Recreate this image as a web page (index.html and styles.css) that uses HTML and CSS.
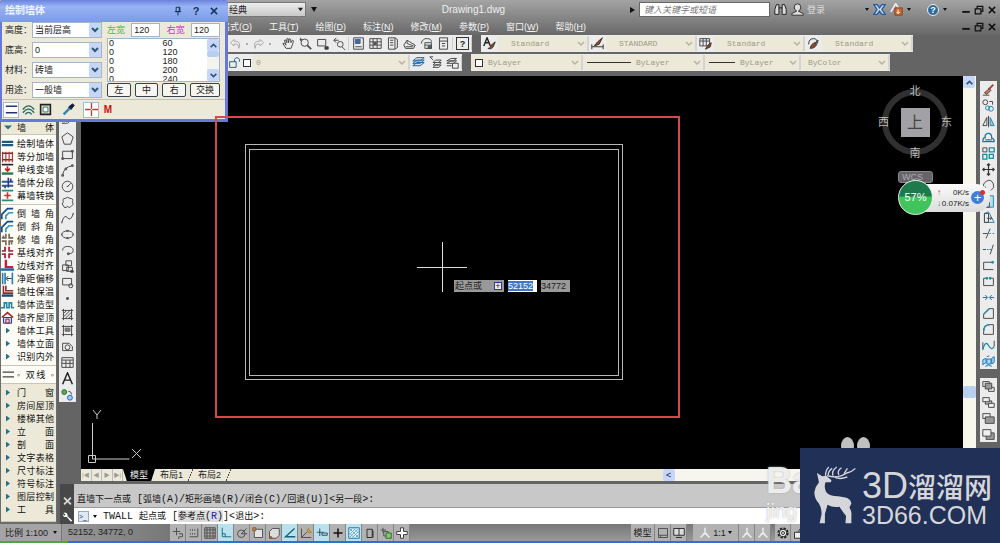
FILE: index.html
```html
<!DOCTYPE html>
<html>
<head>
    <meta charset="UTF-8">
    <meta name="viewport" content="width=device-width, initial-scale=1.0">
    <title>Drawing1.dwg</title>
    <link rel="stylesheet" href="styles.css">
</head>
<body>
<svg class="sprite" width="0" height="0">
    <!-- dialog -->
    <symbol id="pin" viewBox="0 0 16 16"><path d="M5 2h6v7H5zM3 9h10M8 9v6M10 2v7" stroke-width="1.6"/></symbol>
    <symbol id="cross" viewBox="0 0 16 16"><path d="M3 3l10 10M13 3L3 13" stroke-width="2.4"/></symbol>
    <symbol id="two-lines" viewBox="0 0 16 16"><path d="M1 4h14M1 12h14" stroke="#237" stroke-width="2"/></symbol>
    <symbol id="arcs" viewBox="0 0 16 16"><path d="M1 8q7-9 14 0M1 12q7-9 14 0M4 14q4-5 8 0" stroke="#276a62" stroke-width="1.6"/></symbol>
    <symbol id="box" viewBox="0 0 16 16"><path d="M2 2h12v12H2z" stroke="#222" stroke-width="2"/><path d="M5 5h6v6H5z" fill="#fff" stroke="#2b7a5c"/></symbol>
    <symbol id="dropper" viewBox="0 0 16 16"><path d="M2 14l7-7" stroke="#38a" stroke-width="3"/><path d="M8 5l3 3 4-5-2-2z" fill="#124" stroke="#124"/></symbol>
    <symbol id="cross-red" viewBox="0 0 16 16"><path d="M8 0v7M8 9v7M0 8h7M9 8h7" stroke="#c33" stroke-width="1.6"/></symbol>
    <!-- standard toolbar -->
    <symbol id="undo" viewBox="0 0 16 16"><path d="M6 3L2 7l4 4V9q6-2 6 5 4-9-6-9z" stroke="#aaa"/></symbol>
    <symbol id="redo" viewBox="0 0 16 16"><path d="M10 3l4 4-4 4V9Q4 7 4 14 0 5 10 5z" stroke="#aaa"/></symbol>
    <symbol id="hand" viewBox="0 0 16 16"><path d="M5 14L1 8q2-2 4 2L3 4q2-2 3 3L6 2q2-2 2 5l1-5q2-1 2 5l2-3q2 0 0 5l-2 5z"/></symbol>
    <symbol id="zoom" viewBox="0 0 16 16"><circle cx="7" cy="7" r="4.5"/><path d="M10 10l5 5" stroke-width="2"/><path d="M1 3h3M2 1v4"/></symbol>
    <symbol id="zoom-win" viewBox="0 0 16 16"><path d="M2 3h10v8H2z"/><path d="M11 12h4v3h-4z" fill="#333"/></symbol>
    <symbol id="zoom-prev" viewBox="0 0 16 16"><circle cx="9" cy="9" r="3.5"/><path d="M11 12l4 4M1 4h6M4 1L1 4l3 3"/></symbol>
    <symbol id="palette" viewBox="0 0 16 16"><path d="M2 1h12v14H2z"/><path d="M4 3h6v5H4z" fill="#469" stroke="#469"/><path d="M4 12h8"/></symbol>
    <symbol id="design" viewBox="0 0 16 16"><path d="M1 2h14v12H1zM5 2v12M10 2v12M1 6h14M1 10h14"/><path d="M6 7h3v2H6z" fill="#469"/></symbol>
    <symbol id="tool-pal" viewBox="0 0 16 16"><path d="M3 1h8v14H3zM11 1l3 2v10l-3 2M5 4h4M5 7h4M5 10h4"/></symbol>
    <symbol id="sheet" viewBox="0 0 16 16"><path d="M1 10l4-6 10 6-2 4H3zM5 4v4l8 3M3 12h9"/></symbol>
    <symbol id="markup" viewBox="0 0 16 16"><path d="M2 8q-1-3 2-4 1-3 5-2 5 0 5 4M6 7h8v7H6zM6 10h8"/><path d="M10 11h4v3h-4z" fill="#469"/></symbol>
    <symbol id="calc" viewBox="0 0 16 16"><path d="M3 1h10v14H3zM3 5h10M6 8h4M6 11h4"/></symbol>
    <symbol id="layers" viewBox="0 0 16 16"><path d="M1 12h9l5-4H6zM1 9h9l5-4H6zM1 6h9l5-4H6z" fill="#dde" stroke="#269"/></symbol>
    <symbol id="layer-prev" viewBox="0 0 16 16"><path d="M5 14h7l3-3H8zM5 11h7l3-3H8zM5 8h7l3-3H8zM1 1l4 4M1 1h4"/></symbol>
    <symbol id="layer-state" viewBox="0 0 16 16"><path d="M1 12h6M1 9h8l4-3H6zM1 6h8l4-3H6z"/><path d="M8 9h7v6H8z" fill="#eee"/></symbol>
    <symbol id="lock" viewBox="0 0 16 16"><path d="M2 7h8v7H2zM8 7V4q3-4 6 0v3" stroke="#267"/></symbol>
    <symbol id="brush" viewBox="0 0 16 16"><path d="M2 9q0-7 6-7 5 0 5 6" stroke="#333"/><path d="M14 4L9 9" stroke-width="2"/><path d="M10 7q-5 1-6 7 6 0 8-5z" fill="#8a4a2c" stroke="#432"/></symbol>
    <symbol id="text-style" viewBox="0 0 16 16"><path d="M1 11L5 1l4 10M3 7h5" stroke="#222" stroke-width="1.8"/><path d="M15 6l-5 4q-1 5-4 4 5 2 7-3z" fill="#8a4a2c" stroke="#432"/></symbol>
    <symbol id="dim-style" viewBox="0 0 16 16"><path d="M1 9v6M15 9v6M1 12h14" stroke="#333"/><path d="M14 1L8 6 4 11l6-2z" fill="#8a4a2c" stroke="#432"/></symbol>
    <symbol id="table-style" viewBox="0 0 16 16"><path d="M1 2h12v9H1zM1 5h12M5 2v9M9 2v9"/><path d="M15 7l-4 3-3 5 6-3z" fill="#8a4a2c" stroke="#432"/></symbol>
    <!-- title bar -->
    <symbol id="binoculars" viewBox="0 0 16 16"><path d="M1 14V8l2-6h3v12zM10 14V2h3l2 6v6zM6 6h4" fill="#ddd" stroke="#222"/></symbol>
    <symbol id="user" viewBox="0 0 16 16"><path d="M8 1q4 0 4 4t-3 5l6 3v2H1v-2l6-3Q4 9 4 5t4-4z" fill="#ddd" stroke="#333"/></symbol>
    <symbol id="exchange" viewBox="0 0 16 16"><path d="M1 2h4l3 4 3-4h4l-4 6 4 6h-4l-3-4-3 4H1l4-6z" fill="#c8d8f4" stroke="#225a9a" stroke-width="1.6"/></symbol>
    <symbol id="a360" viewBox="0 0 16 16"><path d="M1 11L7 1l4 6" stroke="#eee" stroke-width="2"/><path d="M6 6h9v9H6z" fill="#c96a26" stroke="#843"/><path d="M10 8v5M8 11l2 2 2-2" stroke="#fff"/></symbol>
    <symbol id="minimize" viewBox="0 0 16 16"><path d="M2 11h12" stroke="#111" stroke-width="3"/></symbol>
    <symbol id="restore" viewBox="0 0 16 16"><path d="M5 5V2h9v8h-3M2 6h9v8H2z" stroke="#111" stroke-width="2"/></symbol>
    <!-- wall tools -->
    <symbol id="w-draw" viewBox="0 0 16 16"><path d="M1 6h14M1 10h14" stroke="#1d5a80" stroke-width="3"/></symbol>
    <symbol id="w-split" viewBox="0 0 16 16"><path d="M1 4h14M1 12h14" stroke="#822" stroke-width="2"/><path d="M2 2v13M6 2v13M10 2v13M14 2v13" stroke="#a33" stroke-width="1.4"/></symbol>
    <symbol id="w-single" viewBox="0 0 16 16"><path d="M1 2h14" stroke="#222" stroke-width="2"/><path d="M8 4v5M5 7l3 3 3-3" stroke="#c22" stroke-width="2"/><path d="M1 13h14" stroke="#297c55" stroke-width="3"/></symbol>
    <symbol id="w-seg" viewBox="0 0 16 16"><path d="M1 7h14M1 12h14" stroke="#268" stroke-width="2.4"/><path d="M9 2v12M5 12v3M12 3v4" stroke="#339" stroke-width="2"/></symbol>
    <symbol id="w-curtain" viewBox="0 0 16 16"><path d="M1 2h14M1 14h14" stroke="#2a8a7a" stroke-width="2"/><path d="M8 4v8M4 8h8" stroke="#c33" stroke-width="2"/></symbol>
    <symbol id="w-corner" viewBox="0 0 16 16"><path d="M1 15V9l7-7h7" stroke="#124b85" stroke-width="2"/><path d="M6 15v-4l4-4h5" stroke="#2998c0" stroke-width="2"/></symbol>
    <symbol id="w-trim" viewBox="0 0 16 16"><path d="M6 1v5H1M10 1v5h5M6 15v-5H1M10 15v-5h5M3 3v3M13 10v4" stroke="#765" stroke-width="2"/></symbol>
    <symbol id="w-base" viewBox="0 0 16 16"><path d="M5 1v5H1M10 1v5h5M5 15v-5H1M10 15v-5h5" stroke="#a23348" stroke-width="2.4"/></symbol>
    <symbol id="w-edge" viewBox="0 0 16 16"><path d="M6 1v9h9" stroke="#b24" stroke-width="3"/><path d="M0 13h16" stroke="#26a" stroke-width="3"/></symbol>
    <symbol id="w-dist" viewBox="0 0 16 16"><path d="M2 1v14M14 1v14M5 1v14" stroke="#2a82a8" stroke-width="2"/><path d="M7 8h6M9 5L6 8l3 3" stroke="#136"/></symbol>
    <symbol id="w-warm" viewBox="0 0 16 16"><path d="M3 1v9h12M6 1v6h9" stroke="#833" stroke-width="2"/><path d="M1 13h14" stroke="#247" stroke-width="3"/></symbol>
    <symbol id="w-shape" viewBox="0 0 16 16"><path d="M0 12h4V6h3v6h3V6h3v6h3" stroke="#2687a0" stroke-width="2"/></symbol>
    <symbol id="w-roof" viewBox="0 0 16 16"><path d="M1 8l7-6 7 6" stroke="#a22" stroke-width="2"/><path d="M3 8h10v7H3z" fill="#c8d0ff" stroke="#239"/><path d="M6 10h4v5H6z" stroke="#a22"/></symbol>
    <symbol id="w-double" viewBox="0 0 16 16"><path d="M2 5h14M2 11h14" stroke="#444" stroke-width="1.6"/></symbol>
    <!-- draw toolbar -->
    <symbol id="d-pline" viewBox="0 0 16 16"><path d="M1 9h5q5 0 5-5h4M2 7h3M12 2h2"/></symbol>
    <symbol id="d-polygon" viewBox="0 0 16 16"><path d="M8 1l7 5-3 9H4L1 6z"/></symbol>
    <symbol id="d-rect" viewBox="0 0 16 16"><path d="M2 4h12v9H2z"/><path d="M1 12h2v2H1zM13 3h2v2h-2z"/></symbol>
    <symbol id="d-arc" viewBox="0 0 16 16"><path d="M2 14Q3 4 14 2M1 13h2v2H1zM13 1h2v2h-2zM5 5h2v2H5z"/></symbol>
    <symbol id="d-circle" viewBox="0 0 16 16"><circle cx="8" cy="8" r="6.5"/><path d="M8 8l4-4M7 8h2"/></symbol>
    <symbol id="d-cloud" viewBox="0 0 16 16"><path d="M5 3q3-3 6 0 5 0 3 4 2 4-1 5-2 4-5 1-4 3-5-1-3-2 0-5-2-4 2-4z"/></symbol>
    <symbol id="d-spline" viewBox="0 0 16 16"><path d="M1 13Q4 2 8 7t7-5M1 12v2M15 1v2"/></symbol>
    <symbol id="d-ellipse" viewBox="0 0 16 16"><ellipse cx="8" cy="8" rx="7" ry="4.5"/><path d="M7 3h2v1H7zM7 12h2v1H7zM1 7v2M15 7v2"/></symbol>
    <symbol id="d-earc" viewBox="0 0 16 16"><path d="M2 8q0-5 6-5 7 0 7 5 0 4-6 4M8 11h2v2H8z"/></symbol>
    <symbol id="d-insert" viewBox="0 0 16 16"><path d="M6 1h7v6H6zM2 6h7v7H2zM7 9h7v5H7z"/><path d="M12 13h3v2h-3z" fill="#333"/></symbol>
    <symbol id="d-block" viewBox="0 0 16 16"><path d="M2 3h11v8H2z"/><circle cx="12" cy="12" r="2.5"/></symbol>
    <symbol id="d-point" viewBox="0 0 16 16"><path d="M7 7h2v2H7z" fill="#444"/></symbol>
    <symbol id="d-hatch" viewBox="0 0 16 16"><path d="M1 3h14M1 13h14M3 1v14M13 1v14M3 7l4-4M3 11l8-8M5 13l8-8M9 13l4-4"/></symbol>
    <symbol id="d-grad" viewBox="0 0 16 16"><path d="M1 3h14M1 13h14M3 1v14M13 1v14"/><path d="M5 5h6v4H5z" fill="#777" stroke="#777"/></symbol>
    <symbol id="d-region" viewBox="0 0 16 16"><path d="M2 13V4h8l4 4v5z"/><circle cx="8" cy="9" r="3"/></symbol>
    <symbol id="d-table" viewBox="0 0 16 16"><path d="M1 2h14v12H1zM1 5h14M1 9h14M6 5v9M11 5v9"/></symbol>
    <symbol id="d-text" viewBox="0 0 16 16"><path d="M2 15L8 1l6 14M4 10h8" stroke="#222" stroke-width="1.8"/></symbol>
    <symbol id="d-add" viewBox="0 0 16 16"><circle cx="4" cy="5" r="3" fill="#5a5" stroke="#363"/><circle cx="11" cy="12" r="3" fill="#9cf" stroke="#26a"/><path d="M9 4q4 0 4 4"/></symbol>
    <!-- modify toolbar -->
    <symbol id="m-erase" viewBox="0 0 16 16"><path d="M14 2L8 8" stroke="#a44" stroke-width="2.4"/><path d="M9 7l-6 5 3 2 5-5z" fill="#b86" stroke="#633"/><path d="M1 15h8"/></symbol>
    <symbol id="m-copy" viewBox="0 0 16 16"><circle cx="4" cy="4" r="3"/><g stroke="#28a"><circle cx="11" cy="12" r="3"/><circle cx="7" cy="11" r="2.6"/></g><path d="M9 3h4v4"/></symbol>
    <symbol id="m-mirror" viewBox="0 0 16 16"><path d="M6 3v10H1zM8 1v14"/><path d="M10 3v10h5z" fill="#9cd" stroke="#28a"/></symbol>
    <symbol id="m-offset" viewBox="0 0 16 16"><path d="M1 13h14q0-4-3-4 0-7-5-6-4 1-3 5-3 0-3 5zM4 11h8" stroke="#27a" stroke-width="1.6"/></symbol>
    <symbol id="m-array" viewBox="0 0 16 16"><path d="M1 1h5v5H1z"/><path d="M9 1h6v5H9zM1 9h5v6H1zM9 9h5v5H9z" stroke="#28a" stroke-width="1.6"/></symbol>
    <symbol id="m-move" viewBox="0 0 16 16"><path d="M8 1v14M1 8h14M6 3l2-2 2 2M6 13l2 2 2-2M3 6L1 8l2 2M13 6l2 2-2 2" stroke="#333" stroke-width="1.5"/></symbol>
    <symbol id="m-rotate" viewBox="0 0 16 16"><path d="M4 13Q-1 7 5 3t9 3q2 5-3 8M4 9v4H0"/></symbol>
    <symbol id="m-scale" viewBox="0 0 16 16"><path d="M3 1h11v14H3z" fill="#bde" stroke="#28a"/><path d="M3 9h6v6H3z"/></symbol>
    <symbol id="m-stretch" viewBox="0 0 16 16"><path d="M3 14V3l5-2 7 13z" stroke="#28a"/><path d="M3 14V3h5v11zM6 9h6M10 7l2 2-2 2"/></symbol>
    <symbol id="m-trim" viewBox="0 0 16 16"><path d="M1 8h6M10 2L5 14"/><path d="M9 8h2M13 8h2" stroke="#28a"/></symbol>
    <symbol id="m-extend" viewBox="0 0 16 16"><path d="M1 8h4M14 2l-4 12"/><path d="M6 8h2M9 8h2" stroke="#28a"/></symbol>
    <symbol id="m-break1" viewBox="0 0 16 16"><path d="M12 4H2v9h12"/><path d="M12 3h2v2h-2z" fill="#28a" stroke="#28a"/></symbol>
    <symbol id="m-break" viewBox="0 0 16 16"><path d="M6 4H2v9h12V4h-4"/><path d="M5 3h2v2H5zM9 3h2v2H9z" fill="#28a" stroke="#28a"/></symbol>
    <symbol id="m-join" viewBox="0 0 16 16"><path d="M1 8h5M15 8h-5M4 5l3 3-3 3M12 5L9 8l3 3" stroke="#276a90"/></symbol>
    <symbol id="m-chamfer" viewBox="0 0 16 16"><path d="M2 14V9l7-7h5v12z"/><path d="M2 9l7-7" stroke="#28a" stroke-width="1.8"/></symbol>
    <symbol id="m-fillet" viewBox="0 0 16 16"><path d="M2 14v-4q0-8 8-8h4v12z"/><path d="M2 10q0-8 8-8" stroke="#28a" stroke-width="1.8"/></symbol>
    <symbol id="m-blend" viewBox="0 0 16 16"><path d="M1 4v9M15 2v7"/><path d="M1 13Q4 1 8 8t7 1" stroke="#28a" stroke-width="1.6"/></symbol>
    <symbol id="m-explode" viewBox="0 0 16 16"><path d="M1 6l4-2v5l-4 3zM6 5h5v6H6zM12 4l3-2v7l-3 2zM4 14l4-2 4 2M6 2l3-1" fill="#adf" stroke="#27a"/></symbol>
    <symbol id="o-front" viewBox="0 0 16 16"><path d="M1 2h8v6H1zM8 9h7v5H8z"/><path d="M4 4h8v7H4z" fill="#999"/></symbol>
    <symbol id="o-back" viewBox="0 0 16 16"><path d="M4 6h8v4H4z" fill="#bbb"/><path d="M1 2h8v5H1zM8 9h7v5H8z" fill="#eee"/></symbol>
    <symbol id="o-above" viewBox="0 0 16 16"><path d="M1 2h9v6H1z"/><path d="M4 6h11v8H4z" fill="#999"/></symbol>
    <symbol id="o-under" viewBox="0 0 16 16"><path d="M5 6h10v8H5z" fill="#999"/><path d="M1 2h10v8H1z" fill="#eee"/></symbol>
    <!-- status bar -->
    <symbol id="s-infer" viewBox="0 0 16 16"><path d="M6 1v10M1 6h10M9 9h5v4H9v3"/></symbol>
    <symbol id="s-snap" viewBox="0 0 16 16"><path d="M3 3v2M6 3v2M9 3v2M3 8v2M6 8v2M9 8v2M2 13h11V2"/></symbol>
    <symbol id="s-grid" viewBox="0 0 16 16"><path d="M1 1h14v14H1zM4 1v14M8 1v14M12 1v14M1 4h14M1 8h14M1 12h14"/></symbol>
    <symbol id="s-ortho" viewBox="0 0 16 16"><path d="M3 1v12h12M3 9h4v4" stroke="#167"/></symbol>
    <symbol id="s-polar" viewBox="0 0 16 16"><circle cx="7" cy="9" r="5"/><path d="M7 9l7-7M7 9h8"/></symbol>
    <symbol id="s-osnap" viewBox="0 0 16 16"><path d="M3 3h11v11H3z" fill="#e4e4e4"/><path d="M1 1h4v4H1z" fill="#b96" stroke="#852"/></symbol>
    <symbol id="s-3d" viewBox="0 0 16 16"><path d="M2 6l4-4h9v9l-4 4H2z" fill="#ddd"/><path d="M2 13h3v2H2z" fill="#b64" stroke="#852"/></symbol>
    <symbol id="s-track" viewBox="0 0 16 16"><path d="M14 2L2 13h13" stroke="#167" stroke-width="1.8"/></symbol>
    <symbol id="s-ucs" viewBox="0 0 16 16"><path d="M2 2v12h13M2 14l8-8"/><path d="M11 2l2 3 2 2-3 1-2-3z" fill="#e8b33c" stroke="#a72"/></symbol>
    <symbol id="s-dyn" viewBox="0 0 16 16"><path d="M5 2v10M1 7h9M8 11h7V8H8z" stroke="#245"/></symbol>
    <symbol id="s-plus" viewBox="0 0 16 16"><path d="M8 2v12M2 8h12" stroke="#111" stroke-width="2"/></symbol>
    <symbol id="s-trans" viewBox="0 0 16 16"><path d="M1 1h14v14H1z" fill="#eaf6ff" stroke="#269"/><path d="M2 6l4-4M2 10l8-8M2 14L14 2M6 14l8-8M10 14l4-4M2 2l12 12M2 8l6 6M8 2l6 6" stroke="#58a8d8"/></symbol>
    <symbol id="s-doc" viewBox="0 0 16 16"><path d="M4 3h7v11H4zM11 5h1v9" stroke="#222"/></symbol>
    <symbol id="s-cycle" viewBox="0 0 16 16"><path d="M4 1v7M1 4h7M5 6h6v6H5z"/><path d="M8 8h7v7H8z" fill="#7c6" stroke="#362"/></symbol>
    <symbol id="s-cross" viewBox="0 0 16 16"><path d="M6 1h4v5h5v4h-5v5H6v-5H1V6h5z" fill="#fff" stroke="#333"/></symbol>
    <symbol id="s-model" viewBox="0 0 16 16"><path d="M2 2h12v12H2zM2 11h12M5 11v3"/></symbol>
    <symbol id="s-views" viewBox="0 0 16 16"><path d="M1 2h14v9H1zM8 2v9M4 14h8" fill="#ddd" stroke="#222"/></symbol>
    <symbol id="s-anno" viewBox="0 0 16 16"><path d="M8 1v7L2 14M8 8l6 6M5 9h6" stroke="#eee" stroke-width="2"/></symbol>
    <symbol id="s-gear" viewBox="0 0 16 16"><circle cx="8" cy="8" r="6" stroke="#222" stroke-width="3" stroke-dasharray="3 1.7"/><circle cx="8" cy="8" r="5" fill="#eee" stroke="#222"/><circle cx="8" cy="8" r="2" stroke="#222"/></symbol>
    <symbol id="s-lock" viewBox="0 0 16 16"><path d="M2 7h12v8H2zM8 7V4q3-4 6 0" stroke="#222" fill="#eee"/></symbol>
    <symbol id="wrench" viewBox="0 0 16 16"><path d="M2 2q4-2 6 2v3l7 6-2 2-6-7q-5 1-6-4l3 2 1-2z" fill="#fff" stroke="none"/></symbol>
    <symbol id="chev-up" viewBox="0 0 16 16"><path d="M3 11l5-5 5 5" stroke="#357" stroke-width="3"/></symbol>
    <symbol id="chev-down" viewBox="0 0 16 16"><path d="M3 5l5 5 5-5" stroke="#357" stroke-width="3"/></symbol>
</svg>

<div class="app">
    <header class="head">
        <div class="title-bar">
            <select class="workspace" aria-label="工作空间"><option>经典</option></select>
            <span class="caret"></span>
            <h1 class="title">Drawing1.dwg</h1>
            <div class="info">
                <span class="caret side"></span>
                <input class="search" type="text" placeholder="键入关键字或短语" aria-label="搜索">
                <button class="tool" aria-label="查找"><svg class="ic"><use href="#binoculars"/></svg></button>
                <button class="tool login"><svg class="ic"><use href="#user"/></svg>登录</button>
                <span class="caret small"></span>
                <button class="tool" aria-label="交换"><svg class="ic"><use href="#exchange"/></svg></button>
                <button class="tool" aria-label="连接"><svg class="ic"><use href="#a360"/></svg></button>
                <span class="caret small"></span>
                <button class="help">?</button>
                <span class="caret small"></span>
            </div>
            <div class="win">
                <button class="tool" aria-label="最小化"><svg class="ic"><use href="#minimize"/></svg></button>
                <button class="tool" aria-label="还原"><svg class="ic"><use href="#restore"/></svg></button>
                <button class="tool dark" aria-label="关闭"><svg class="ic"><use href="#cross"/></svg></button>
            </div>
        </div>
        <div class="menu-bar">
            <nav class="menu">
                <a href="#">格式(<u>O</u>)</a>
                <a href="#">工具(<u>T</u>)</a>
                <a href="#">绘图(<u>D</u>)</a>
                <a href="#">标注(<u>N</u>)</a>
                <a href="#">修改(<u>M</u>)</a>
                <a href="#">参数(<u>P</u>)</a>
                <a href="#">窗口(<u>W</u>)</a>
                <a href="#">帮助(<u>H</u>)</a>
            </nav>
            <div class="win">
                <button class="tool" aria-label="最小化"><svg class="ic"><use href="#minimize"/></svg></button>
                <button class="tool" aria-label="还原"><svg class="ic"><use href="#restore"/></svg></button>
                <button class="tool dark" aria-label="关闭"><svg class="ic"><use href="#cross"/></svg></button>
            </div>
        </div>
        <div class="bars">
            <div class="bar">
                <div class="bar-group first">
                    <button class="tool" aria-label="放弃"><svg class="ic"><use href="#undo"/></svg></button><i class="dot"></i>
                    <button class="tool" aria-label="重做"><svg class="ic"><use href="#redo"/></svg></button><i class="dot"></i>
                </div>
                <div class="bar-group">
                    <button class="tool" aria-label="平移"><svg class="ic"><use href="#hand"/></svg></button>
                    <button class="tool" aria-label="缩放"><svg class="ic"><use href="#zoom"/></svg></button>
                    <button class="tool" aria-label="窗口缩放"><svg class="ic"><use href="#zoom-win"/></svg></button>
                    <button class="tool" aria-label="上一个"><svg class="ic"><use href="#zoom-prev"/></svg></button>
                </div>
                <div class="bar-group">
                    <button class="tool" aria-label="特性"><svg class="ic"><use href="#palette"/></svg></button>
                    <button class="tool" aria-label="设计中心"><svg class="ic"><use href="#design"/></svg></button>
                    <button class="tool" aria-label="工具选项板"><svg class="ic"><use href="#tool-pal"/></svg></button>
                    <button class="tool" aria-label="图纸集"><svg class="ic"><use href="#sheet"/></svg></button>
                    <button class="tool" aria-label="标记集"><svg class="ic"><use href="#markup"/></svg></button>
                    <button class="tool" aria-label="计算器"><svg class="ic"><use href="#calc"/></svg></button>
                </div>
                <div class="bar-group">
                    <button class="tool ask">?</button>
                </div>
            </div>
            <div class="bar styles">
                <div class="combo"><svg class="ic"><use href="#text-style"/></svg><select aria-label="文字样式"><option>Standard</option></select></div>
                <div class="combo"><svg class="ic"><use href="#dim-style"/></svg><select aria-label="标注样式"><option>STANDARD</option></select></div>
                <div class="combo"><svg class="ic"><use href="#table-style"/></svg><select aria-label="表格样式"><option>Standard</option></select></div>
                <div class="combo"><svg class="ic"><use href="#brush"/></svg><select aria-label="引线样式"><option>Standard</option></select></div>
            </div>
        </div>
        <div class="bars">
            <div class="bar">
                <div class="combo layer"><svg class="ic"><use href="#lock"/></svg><i class="swatch"></i><select aria-label="图层"><option>0</option></select></div>
                <div class="bar-group">
                    <button class="tool" aria-label="图层"><svg class="ic"><use href="#layers"/></svg></button>
                    <button class="tool" aria-label="上一个图层"><svg class="ic"><use href="#layer-prev"/></svg></button>
                    <button class="tool" aria-label="图层状态"><svg class="ic"><use href="#layer-state"/></svg></button>
                </div>
            </div>
            <div class="bar props">
                <div class="combo color"><i class="swatch"></i><select aria-label="颜色"><option>ByLayer</option></select></div>
                <div class="combo linetype"><i class="stroke"></i><select aria-label="线型"><option>ByLayer</option></select></div>
                <div class="combo weight"><i class="stroke short"></i><select aria-label="线宽"><option>ByLayer</option></select></div>
                <div class="combo plot"><select aria-label="打印样式"><option>ByColor</option></select></div>
            </div>
        </div>
    </header>

    <div class="body">
        <aside class="side-menu">
            <div class="group plain">
                <button class="entry"><i class="tri open"></i><span>墙体</span></button>
            </div>
            <div class="group">
                <button class="entry"><svg class="ic"><use href="#w-draw"/></svg><span>绘制墙体</span></button>
                <button class="entry"><svg class="ic"><use href="#w-split"/></svg><span>等分加墙</span></button>
                <button class="entry"><svg class="ic"><use href="#w-single"/></svg><span>单线变墙</span></button>
                <button class="entry"><svg class="ic"><use href="#w-seg"/></svg><span>墙体分段</span></button>
                <button class="entry"><svg class="ic"><use href="#w-curtain"/></svg><span>幕墙转换</span></button>
            </div>
            <div class="group">
                <button class="entry"><svg class="ic"><use href="#w-corner"/></svg><span>倒墙角</span></button>
                <button class="entry"><svg class="ic"><use href="#w-corner"/></svg><span>倒斜角</span></button>
                <button class="entry"><svg class="ic"><use href="#w-trim"/></svg><span>修墙角</span></button>
                <button class="entry"><svg class="ic"><use href="#w-base"/></svg><span>基线对齐</span></button>
                <button class="entry"><svg class="ic"><use href="#w-edge"/></svg><span>边线对齐</span></button>
                <button class="entry"><svg class="ic"><use href="#w-dist"/></svg><span>净距偏移</span></button>
                <button class="entry"><svg class="ic"><use href="#w-warm"/></svg><span>墙柱保温</span></button>
                <button class="entry"><svg class="ic"><use href="#w-shape"/></svg><span>墙体造型</span></button>
                <button class="entry"><svg class="ic"><use href="#w-roof"/></svg><span>墙齐屋顶</span></button>
                <button class="entry"><i class="tri"></i><span>墙体工具</span></button>
                <button class="entry"><i class="tri"></i><span>墙体立面</span></button>
                <button class="entry"><i class="tri"></i><span>识别内外</span></button>
            </div>
            <div class="group">
                <button class="entry"><svg class="ic"><use href="#w-double"/></svg><span>◦ 双线 ◦</span></button>
            </div>
            <div class="group plain last">
                <button class="entry"><i class="tri"></i><span>门窗</span></button>
                <button class="entry"><i class="tri"></i><span>房间屋顶</span></button>
                <button class="entry"><i class="tri"></i><span>楼梯其他</span></button>
                <button class="entry"><i class="tri"></i><span>立面</span></button>
                <button class="entry"><i class="tri"></i><span>剖面</span></button>
                <button class="entry"><i class="tri"></i><span>文字表格</span></button>
                <button class="entry"><i class="tri"></i><span>尺寸标注</span></button>
                <button class="entry"><i class="tri"></i><span>符号标注</span></button>
                <button class="entry"><i class="tri"></i><span>图层控制</span></button>
                <button class="entry"><i class="tri"></i><span>工具</span></button>
            </div>
        </aside>

        <div class="main">
            <div class="work">
                <div class="dock left">
                    <div class="palette">
                        <button class="tool" aria-label="多段线"><svg class="ic"><use href="#d-pline"/></svg></button>
                        <button class="tool" aria-label="多边形"><svg class="ic"><use href="#d-polygon"/></svg></button>
                        <button class="tool" aria-label="矩形"><svg class="ic"><use href="#d-rect"/></svg></button>
                        <button class="tool" aria-label="圆弧"><svg class="ic"><use href="#d-arc"/></svg></button>
                        <button class="tool" aria-label="圆"><svg class="ic"><use href="#d-circle"/></svg></button>
                        <button class="tool" aria-label="修订云线"><svg class="ic"><use href="#d-cloud"/></svg></button>
                        <button class="tool" aria-label="样条曲线"><svg class="ic"><use href="#d-spline"/></svg></button>
                        <button class="tool" aria-label="椭圆"><svg class="ic"><use href="#d-ellipse"/></svg></button>
                        <button class="tool" aria-label="椭圆弧"><svg class="ic"><use href="#d-earc"/></svg></button>
                        <button class="tool" aria-label="插入块"><svg class="ic"><use href="#d-insert"/></svg></button>
                        <button class="tool" aria-label="创建块"><svg class="ic"><use href="#d-block"/></svg></button>
                        <button class="tool" aria-label="点"><svg class="ic"><use href="#d-point"/></svg></button>
                        <button class="tool" aria-label="图案填充"><svg class="ic"><use href="#d-hatch"/></svg></button>
                        <button class="tool" aria-label="渐变色"><svg class="ic"><use href="#d-grad"/></svg></button>
                        <button class="tool" aria-label="面域"><svg class="ic"><use href="#d-region"/></svg></button>
                        <button class="tool" aria-label="表格"><svg class="ic"><use href="#d-table"/></svg></button>
                        <button class="tool" aria-label="多行文字"><svg class="ic"><use href="#d-text"/></svg></button>
                        <button class="tool" aria-label="添加选定对象"><svg class="ic"><use href="#d-add"/></svg></button>
                    </div>
                </div>

                <div class="view">
                    <div class="view-row">
                        <div class="canvas">
                            <svg class="drawing">
                                <g fill="none" stroke="#b8b8b8">
                                    <rect x="164.5" y="68.5" width="377" height="235"/>
                                    <rect x="168.5" y="73.5" width="369" height="226"/>
                                </g>
                                <path d="M336 191.5h50M361.5 166v50" stroke="#ddd"/>
                                <!-- ucs axes -->
                                <path d="M11.5 347v36h37M7.5 379.5h7v7h-7zM12 334l4 5 4-5M16 339v4M51 373l9 9M60 373l-9 9" fill="none" stroke="#ccc"/>
                            </svg>
                            <div class="mark"></div>
                            <div class="prompt">
                                <span class="prompt-label">起点或<i>+</i></span>
                                <span class="prompt-x"><b>52152</b></span>
                                <span class="prompt-y">34772</span>
                            </div>
                            <div class="compass">
                                <span class="n">北</span><span class="w">西</span>
                                <button class="cube">上</button>
                                <span class="e">东</span><span class="s">南</span>
                            </div>
                            <button class="wcs">WCS</button>
                        </div>
                        <div class="scroll">
                            <button class="scroll-btn" aria-label="向上"><svg class="ic"><use href="#chev-up"/></svg></button>
                            <div class="thumb"></div>
                        </div>
                    </div>
                    <div class="tabs">
                        <div class="tab-nav">
                            <button>|◀</button><button>◀</button><button>▶</button><button>▶|</button>
                        </div>
                        <button class="tab on">模型</button>
                        <button class="tab">布局1</button>
                        <i class="slash"></i>
                        <button class="tab">布局2</button>
                        <i class="slash"></i>
                        <div class="hscroll"><button class="scroll-btn">&lt;</button></div>
                    </div>
                </div>

                <div class="dock right">
                    <div class="palette">
                        <button class="tool" aria-label="删除"><svg class="ic"><use href="#m-erase"/></svg></button>
                        <button class="tool" aria-label="复制"><svg class="ic"><use href="#m-copy"/></svg></button>
                        <button class="tool" aria-label="镜像"><svg class="ic"><use href="#m-mirror"/></svg></button>
                        <button class="tool" aria-label="偏移"><svg class="ic"><use href="#m-offset"/></svg></button>
                        <button class="tool" aria-label="阵列"><svg class="ic"><use href="#m-array"/></svg></button>
                        <button class="tool" aria-label="移动"><svg class="ic"><use href="#m-move"/></svg></button>
                        <button class="tool" aria-label="旋转"><svg class="ic"><use href="#m-rotate"/></svg></button>
                        <button class="tool" aria-label="比例"><svg class="ic"><use href="#m-scale"/></svg></button>
                        <button class="tool" aria-label="拉伸"><svg class="ic"><use href="#m-stretch"/></svg></button>
                        <button class="tool" aria-label="修剪"><svg class="ic"><use href="#m-trim"/></svg></button>
                        <button class="tool" aria-label="延伸"><svg class="ic"><use href="#m-extend"/></svg></button>
                        <button class="tool" aria-label="打断于点"><svg class="ic"><use href="#m-break1"/></svg></button>
                        <button class="tool" aria-label="打断"><svg class="ic"><use href="#m-break"/></svg></button>
                        <button class="tool" aria-label="合并"><svg class="ic"><use href="#m-join"/></svg></button>
                        <button class="tool" aria-label="倒角"><svg class="ic"><use href="#m-chamfer"/></svg></button>
                        <button class="tool" aria-label="圆角"><svg class="ic"><use href="#m-fillet"/></svg></button>
                        <button class="tool" aria-label="光顺曲线"><svg class="ic"><use href="#m-blend"/></svg></button>
                        <button class="tool" aria-label="分解"><svg class="ic"><use href="#m-explode"/></svg></button>
                    </div>
                    <div class="palette">
                        <button class="tool" aria-label="前置"><svg class="ic"><use href="#o-front"/></svg></button>
                        <button class="tool" aria-label="后置"><svg class="ic"><use href="#o-back"/></svg></button>
                        <button class="tool" aria-label="置于对象之上"><svg class="ic"><use href="#o-above"/></svg></button>
                        <button class="tool" aria-label="置于对象之下"><svg class="ic"><use href="#o-under"/></svg></button>
                    </div>
                </div>
            </div>

            <div class="command">
                <div class="command-grip">
                    <button class="tool" aria-label="关闭"><svg class="ic"><use href="#cross"/></svg></button>
                    <button class="tool" aria-label="自定义"><svg class="ic"><use href="#wrench"/></svg></button>
                </div>
                <div class="command-text">
                    <p class="history">直墙下一点或<code> [</code>弧墙<code>(A)/</code>矩形画墙<code>(R)/</code>闭合<code>(C)/</code>回退<code>(U)]&lt;</code>另一段<code>&gt;:</code></p>
                    <p class="line"><span class="cli">&gt;_</span><span class="caret small"></span><span><code>TWALL </code>起点或<code> [</code><button class="option">参考点<code>(<em>R</em>)</code></button><code>]&lt;</code>退出<code>&gt;:</code></span></p>
                </div>
            </div>
        </div>
    </div>

    <footer class="status">
        <button class="scale">比例 1:100<span class="caret small"></span></button>
        <span class="coords">52152, 34772, 0</span>
        <div class="toggles">
            <button aria-label="推断约束"><svg class="ic"><use href="#s-infer"/></svg></button>
            <button aria-label="捕捉"><svg class="ic"><use href="#s-snap"/></svg></button>
            <button aria-label="栅格"><svg class="ic"><use href="#s-grid"/></svg></button>
            <button class="on" aria-label="正交"><svg class="ic"><use href="#s-ortho"/></svg></button>
            <button aria-label="极轴"><svg class="ic"><use href="#s-polar"/></svg></button>
            <button aria-label="对象捕捉"><svg class="ic"><use href="#s-osnap"/></svg></button>
            <button aria-label="三维对象捕捉"><svg class="ic"><use href="#s-3d"/></svg></button>
            <button class="on" aria-label="对象追踪"><svg class="ic"><use href="#s-track"/></svg></button>
            <button aria-label="动态UCS"><svg class="ic"><use href="#s-ucs"/></svg></button>
            <button class="on" aria-label="动态输入"><svg class="ic"><use href="#s-dyn"/></svg></button>
            <button aria-label="线宽"><svg class="ic"><use href="#s-plus"/></svg></button>
            <button class="on" aria-label="透明度"><svg class="ic"><use href="#s-trans"/></svg></button>
            <button aria-label="快捷特性"><svg class="ic"><use href="#s-doc"/></svg></button>
            <button aria-label="选择循环"><svg class="ic"><use href="#s-cycle"/></svg></button>
            <button aria-label="注释监视器"><svg class="ic"><use href="#s-cross"/></svg></button>
        </div>
        <div class="toggles model">
            <button class="wide">模型</button>
            <button aria-label="布局"><svg class="ic"><use href="#s-model"/></svg></button>
            <button aria-label="快速查看"><svg class="ic"><use href="#s-views"/></svg></button>
            <button class="wide anno"><svg class="ic"><use href="#s-anno"/></svg>1:1<span class="caret small"></span></button>
            <button aria-label="注释可见性"><svg class="ic"><use href="#s-anno"/></svg></button>
            <button aria-label="自动缩放"><svg class="ic"><use href="#s-anno"/></svg></button>
            <button aria-label="切换工作空间"><svg class="ic"><use href="#s-gear"/></svg></button>
            <button aria-label="锁定"><svg class="ic"><use href="#s-lock"/></svg></button>
        </div>
    </footer>
    <div class="taskbar"><div class="start"></div></div>
</div>

<!-- wall settings -->
<form class="dialog">
    <div class="dialog-title">
        <h2>绘制墙体</h2>
        <button type="button" class="tool" aria-label="固定"><svg class="ic"><use href="#pin"/></svg></button>
        <button type="button" class="tool q">?</button>
        <button type="button" class="tool" aria-label="关闭"><svg class="ic"><use href="#cross"/></svg></button>
    </div>
    <div class="dialog-body">
        <div class="fields">
            <label for="height">高度：</label><select id="height"><option>当前层高</option></select>
            <label for="base">底高：</label><select id="base"><option>0</option></select>
            <label for="material">材料：</label><select id="material"><option>砖墙</option></select>
            <label for="usage">用途：</label><select id="usage"><option>一般墙</option></select>
        </div>
        <div class="widths">
            <div class="width-row">
                <label class="green" for="lw">左宽</label><input id="lw" type="text" value="120">
                <label class="pink" for="rw">右宽</label><input id="rw" type="text" value="120">
            </div>
            <div class="list">
                <table>
                    <tr><td>0</td><td>60</td></tr>
                    <tr><td>0</td><td>120</td></tr>
                    <tr><td>0</td><td>180</td></tr>
                    <tr><td>0</td><td>200</td></tr>
                    <tr><td>0</td><td>240</td></tr>
                </table>
                <div class="list-scroll">
                    <button type="button" class="scroll-btn" aria-label="向上"><svg class="ic"><use href="#chev-up"/></svg></button>
                    <div class="thumb"></div>
                    <button type="button" class="scroll-btn" aria-label="向下"><svg class="ic"><use href="#chev-down"/></svg></button>
                </div>
            </div>
            <div class="aligns">
                <button type="button">左</button><button type="button">中</button><button type="button">右</button><button type="button" class="swap">交换</button>
            </div>
        </div>
    </div>
    <div class="dialog-tools">
        <button type="button" class="tool on" aria-label="直墙"><svg class="ic"><use href="#two-lines"/></svg></button>
        <button type="button" class="tool" aria-label="弧墙"><svg class="ic"><use href="#arcs"/></svg></button>
        <button type="button" class="tool" aria-label="矩形"><svg class="ic"><use href="#box"/></svg></button>
        <button type="button" class="tool gap" aria-label="拾取"><svg class="ic"><use href="#dropper"/></svg></button>
        <button type="button" class="tool on gap" aria-label="捕捉"><svg class="ic"><use href="#cross-red"/></svg></button>
        <button type="button" class="tool m">M</button>
    </div>
</form>

<!-- network speed -->
<div class="speed">
    <div class="ball">57%</div>
    <div class="rates">
        <span><i class="up">↑</i>0K/s</span>
        <span><i class="down">↓</i>0.07K/s</span>
    </div>
    <button class="boost">+</button>
</div>

<div class="baidu">
    <strong>Ba</strong>
    <span>jing</span>
</div>
<div class="paw"><i></i><i></i></div>

<div class="brand">
    <svg class="deer" viewBox="0 0 130 176">
        <path d="M12 20L28 30 40 28 56 42 54 48 38 48Q32 62 40 78 50 90 76 90L98 94Q114 98 116 112L110 124Q118 136 116 150V172H98L100 150Q86 132 80 122 60 126 44 116 40 130 36 144V172H20L26 144Q26 126 18 112 4 98 4 78 6 62 18 48z" fill="#d4d6da"/>
        <path d="M38 28Q38 10 48 2M42 28q34 10 60-8 14-2 26-14M46 26Q46 14 58 6M60 28Q56 12 72 2M78 26Q72 14 86 4M94 22l10-16M60 30q18 12 44 2" fill="none" stroke="#d4d6da" stroke-width="4"/>
    </svg>
    <div class="brand-text">
        <div class="brand-name"><b>3D</b>溜溜网</div>
        <div class="brand-url">3D66.COM</div>
    </div>
</div>
</body>
</html>
```
FILE: styles.css
```css
* {
    box-sizing: border-box;
}

html, body {
    height: 100%;
    margin: 0;
    overflow: hidden;
    background-color: #646464;
    color: #222;
    font: 9px/12px "Liberation Sans", "Noto Sans CJK SC", sans-serif;
}

body {
    position: relative;
}

h1, h2, p {
    margin: 0;
    font-weight: normal;
}

button, input, select {
    margin: 0;
    padding: 0;
    border: 0;
    background: none;
    color: inherit;
    font: inherit;
}

select {
    appearance: none;
    border-radius: 0;
    background: url("data:image/svg+xml,%3Csvg xmlns='http://www.w3.org/2000/svg' viewBox='0 0 8 8'%3E%3Cpath d='M1 2l3 3 3-3' fill='none' stroke='%23b5b2a5' stroke-width='1.4'/%3E%3C/svg%3E") no-repeat right 2px center / 8px 8px;
}

i, em {
    font-style: normal;
}

.sprite {
    position: absolute;
}

.ic {
    display: block;
    flex: none;
    width: 13px;
    height: 13px;
    fill: none;
    stroke: #4a4a4a;
    stroke-width: 1.2;
}

.tool {
    display: flex;
    align-items: center;
    justify-content: center;
}

.caret {
    flex: none;
    border: 3px solid transparent;
    border-top: 5px solid #111;
    border-bottom: 0;
}

.caret.small {
    border-width: 3px 2px 0;
}

.caret.side {
    border: 3px solid transparent;
    border-left: 5px solid #111;
    border-right: 0;
}

.app {
    display: flex;
    flex-direction: column;
    height: 100%;
}

/* header */
.head {
    flex: none;
    padding-bottom: 5px;
}

.title-bar {
    display: flex;
    align-items: center;
    height: 19px;
    padding: 0 3px 0 150px;
    background: linear-gradient(#a4a4a4, #838383);
}

.workspace {
    width: 156px;
    height: 15px;
    margin-right: 5px;
    padding-left: 78px;
    border: 1px solid #777;
    background: url("data:image/svg+xml,%3Csvg xmlns='http://www.w3.org/2000/svg' viewBox='0 0 8 8'%3E%3Cpath d='M1 2h6l-3 4z' fill='%23222'/%3E%3C/svg%3E") no-repeat right 1px center / 7px 7px, linear-gradient(#eee, #c8c8c8);
}

.title {
    margin: 0 auto;
    color: #eee;
    font-size: 10px;
}

.info {
    display: flex;
    align-items: center;
    gap: 4px;
}

.search {
    width: 131px;
    height: 15px;
    padding: 0 4px;
    border: 1px solid #666;
    background: #fff;
}

.search::placeholder {
    color: #777;
    font-style: italic;
}

.login {
    gap: 3px;
    margin-right: 36px;
    color: #ddd;
}

.help {
    width: 12px;
    height: 12px;
    margin-left: 12px;
    border: 1px solid #eee;
    border-radius: 50%;
    background: #2f6a9c;
    color: #fff;
    font-weight: bold;
    line-height: 10px;
}

.win {
    display: flex;
    gap: 3px;
}

.info + .win {
    margin-left: 14px;
}

.win .ic {
    width: 10px;
    height: 10px;
}

.dark .ic {
    stroke: #111;
}

.menu-bar {
    display: flex;
    align-items: center;
    justify-content: space-between;
    height: 16px;
    padding: 0 3px 0 221px;
    background: linear-gradient(#838383, #686868);
}

.menu {
    display: flex;
    gap: 17px;
}

.menu a {
    color: #f4f4f4;
    text-decoration: none;
}

.bars {
    display: flex;
    gap: 9px;
    height: 17px;
    margin-bottom: 2px;
}

.bar {
    display: flex;
    align-items: center;
    background: #ececec;
}

.bars .bar:first-child {
    width: 472px;
    justify-content: flex-end;
}

.bars:last-child {
    margin-bottom: 0;
}

.bars:last-child .bar:first-child {
    width: 462px;
}

.bar-group {
    display: flex;
    align-items: center;
    gap: 4px;
    padding: 0 2px;
    border-right: 1px solid #ccc;
}

.bar-group + .bar-group {
    padding-left: 3px;
}

.bar-group.first {
    margin-right: 6px;
    border: 0;
}

.dot {
    width: 2px;
    height: 2px;
    background: #aaa;
}

.ask {
    width: 13px;
    height: 13px;
    border: 1px solid #333;
    font-weight: bold;
}

.combo {
    display: flex;
    flex: none;
    align-items: center;
    gap: 2px;
    height: 15px;
    padding-left: 2px;
    border-right: 2px solid #d4d4d4;
    color: #9c998a;
    font-family: "Liberation Mono", monospace;
    font-size: 8px;
}

.combo select {
    flex: 1;
    min-width: 0;
    height: 15px;
    padding-left: 3px;
    background-color: #ece9d8;
}

.styles .combo {
    width: 108px;
}

.styles .combo select {
    padding-left: 13px;
}

.layer {
    width: 184px;
}

.props .combo {
    background: #ece9d8;
}

.color {
    width: 112px;
    padding-left: 4px;
}

.linetype {
    width: 122px;
    padding-left: 4px;
}

.weight {
    width: 96px;
    padding-left: 4px;
}

.plot {
    width: 89px;
    padding-left: 4px;
}

.swatch {
    width: 8px;
    height: 8px;
    border: 1px solid #333;
    background: #fff;
}

.stroke {
    width: 44px;
    height: 1px;
    background: #333;
}

.stroke.short {
    width: 26px;
}

/* left menu */
.body {
    display: flex;
    flex: 1;
    min-height: 0;
}

.side-menu {
    display: flex;
    flex: none;
    flex-direction: column;
    width: 57px;
    padding: 45px 1px 2px;
    background: #6c6c6c;
}

.group {
    padding: 2px 0;
    border-bottom: 1px solid #c9c6b8;
    background: #fdfcf7;
}

.group.plain {
    padding: 0;
    background: #ece9d8;
}

.group.last {
    flex: 1;
    padding-top: 2px;
}

.entry {
    display: flex;
    align-items: center;
    gap: 3px;
    width: 100%;
    height: 13px;
    color: #111;
}

.entry span {
    width: 37px;
    text-align: justify;
    text-align-last: justify;
    white-space: nowrap;
}

.tri {
    width: 13px;
    height: 6px;
    background: #27708c;
    clip-path: polygon(5px 0, 9px 3px, 5px 6px);
}

.tri.open {
    clip-path: polygon(3px 1px, 11px 1px, 7px 5px);
}

/* workspace */
.main {
    display: flex;
    flex: 1;
    flex-direction: column;
    min-width: 0;
}

.work {
    display: flex;
    flex: 1;
    min-height: 0;
}

.dock {
    flex: none;
    width: 24px;
    background: #646464;
}

.palette {
    display: flex;
    flex-direction: column;
    width: 17px;
    background: #ececec;
}

.palette .tool {
    height: 16px;
}

.dock.left {
    padding: 38px 0 0 2px;
}

.dock.right {
    padding: 5px 0 0 4px;
    overflow: hidden;
}

.dock.right .palette {
    margin-bottom: 9px;
}

.view {
    display: flex;
    flex: 1;
    flex-direction: column;
    min-width: 0;
}

.view-row {
    display: flex;
    flex: 1;
    min-height: 0;
}

.canvas {
    position: relative;
    flex: 1;
    background: #000;
}

.drawing {
    position: absolute;
    width: 100%;
    height: 100%;
}

.mark {
    position: absolute;
    z-index: 5;
    top: 40px;
    left: 134px;
    width: 465px;
    height: 302px;
    border: 2px solid #d8474a;
}

.prompt {
    position: absolute;
    top: 204px;
    left: 373px;
    display: flex;
    gap: 4px;
    line-height: 12px;
}

.prompt-label {
    display: flex;
    align-items: center;
    justify-content: space-between;
    width: 50px;
    padding: 0 2px 0 1px;
    background: #999;
}

.prompt-label i {
    width: 8px;
    height: 8px;
    border: 1px solid #339;
    background: #eee;
    line-height: 6px;
    text-align: center;
}

.prompt-x, .prompt-y {
    width: 29px;
    height: 12px;
    background: #fff;
}

.prompt-y {
    background: #999;
}

.prompt-x b {
    background: #3d78c8;
    color: #fff;
    font-weight: normal;
}

.compass {
    position: absolute;
    top: 13px;
    right: 15px;
    display: grid;
    place-items: center;
    width: 66px;
    height: 66px;
    border: 6px solid #303030;
    border-radius: 50%;
    color: #bbb;
    font-size: 11px;
}

.compass span {
    position: absolute;
}

.compass .n {
    top: -10px;
}

.compass .s {
    bottom: -10px;
}

.compass .w {
    left: -10px;
}

.compass .e {
    right: -10px;
}

.cube {
    width: 29px;
    height: 29px;
    background: #a2a2a6;
    color: #444;
    font-size: 16px;
    line-height: 29px;
}

.wcs {
    position: absolute;
    top: 95px;
    right: 30px;
    width: 35px;
    height: 12px;
    padding-left: 3px;
    border: 1px solid #888;
    border-radius: 3px;
    background: #66646a;
    color: #aaa;
    text-align: left;
    line-height: 10px;
}

.scroll {
    display: flex;
    flex: none;
    flex-direction: column;
    justify-content: space-between;
    width: 13px;
    padding-bottom: 71px;
    background: #f8f7ee;
}

.scroll-btn {
    display: flex;
    align-items: center;
    justify-content: center;
    width: 12px;
    height: 12px;
    border-radius: 2px;
    background: #c6d6f8;
    color: #124;
}

.scroll-btn .ic {
    width: 9px;
    height: 9px;
}

.thumb {
    height: 12px;
    border-radius: 2px;
    background: #b8cff0;
}

.tabs {
    display: flex;
    flex: none;
    height: 12px;
    margin-bottom: 3px;
    background: #ece9d8;
}

.tab-nav {
    display: flex;
    width: 42px;
}

.tab-nav button {
    width: 25%;
    border-right: 1px solid #bbb;
    color: #999;
    font-size: 6px;
}

.tab {
    padding: 0 5px;
    color: #222;
}

.tab.on {
    padding: 0 7px;
    background: #000;
    color: #eee;
    clip-path: polygon(0 0, 100% 0, 88% 100%, 12% 100%);
}

.slash {
    width: 5px;
    background: linear-gradient(to bottom right, transparent 46%, #444 47%, #444 53%, transparent 54%);
}

.hscroll {
    width: 35%;
    margin-left: auto;
    background: #f6f5ee;
}

/* command line */
.command {
    display: flex;
    flex: none;
    height: 40px;
    padding-left: 3px;
}

.command-grip {
    display: flex;
    flex-direction: column;
    align-items: center;
    justify-content: flex-end;
    gap: 4px;
    width: 14px;
    padding-bottom: 1px;
    background: #484848;
}

.command-grip .ic {
    width: 11px;
    height: 12px;
    stroke: #ddd;
}

.command-text {
    flex: 1;
    color: #111;
}

.command code {
    font: 10px "Liberation Mono", monospace;
    white-space: pre;
}

.history {
    height: 24px;
    padding: 9px 3px 0;
    border-bottom: 1px solid #999;
    background: #c8c8c8;
}

.line {
    display: flex;
    align-items: center;
    gap: 4px;
    height: 16px;
    padding-left: 4px;
    background: #fff;
}

.cli {
    width: 11px;
    border: 1px solid #9ab;
    background: #dfe8f4;
    color: #236;
    font-size: 7px;
    line-height: 9px;
}

.line .caret {
    margin-right: 2px;
}

.option {
    background: #ddd;
}

.option em {
    color: #22a;
}

/* status bar */
.status {
    display: flex;
    flex: none;
    align-items: center;
    height: 17px;
    background: linear-gradient(#777, #999);
}

.scale {
    display: flex;
    align-items: center;
    gap: 5px;
    width: 62px;
    height: 17px;
    padding-left: 5px;
    border-right: 1px solid #777;
    background: #a4a4a4;
}

.coords {
    width: 108px;
    padding-left: 6px;
    line-height: 17px;
    background: linear-gradient(90deg, #999, #777);
}

.toggles {
    display: flex;
}

.toggles button {
    display: flex;
    align-items: center;
    justify-content: center;
    width: 16px;
    height: 17px;
    border-right: 1px solid #858585;
    background: #b2b2b2;
}

.toggles button.on {
    background: #b9e2ee;
}

.toggles .ic {
    width: 12px;
    height: 12px;
}

.toggles.model {
    margin-left: 221px;
}

.toggles.model button.wide {
    width: 24px;
}

.toggles.model button.anno {
    gap: 2px;
    width: 46px;
    margin-left: 6px;
}

.toggles.model button:nth-last-child(2) {
    margin-left: 4px;
}

.taskbar {
    flex: none;
    height: 2px;
    background: #2f6fd8;
}

.start {
    width: 68px;
    height: 2px;
    background: #48a848;
}

/* wall dialog */
.dialog {
    position: absolute;
    z-index: 3;
    top: 0;
    left: 0;
    width: 228px;
    padding: 0 3px 3px 2px;
    border-radius: 4px 4px 0 0;
    background: #6678d8;
}

.dialog-title {
    display: flex;
    align-items: center;
    gap: 6px;
    height: 22px;
    margin: 0 -3px 0 -2px;
    padding: 0 8px 0 5px;
    border-radius: 4px 4px 0 0;
    background: linear-gradient(#6a84dc, #98b4f4 30%, #7b9aea);
    color: #16355c;
}

.dialog-title h2 {
    flex: 1;
    color: #eef3ff;
    font-size: 10px;
    font-weight: bold;
}

.dialog-title .ic {
    width: 12px;
    height: 10px;
    stroke: #16355c;
}

.dialog-title .q {
    width: 12px;
    font-size: 11px;
    font-weight: bold;
}

.dialog-body {
    display: flex;
    gap: 5px;
    height: 77px;
    padding: 0 5px 0 3px;
    background: #ece9d8;
}

.fields {
    display: grid;
    grid-template-columns: 27px 70px;
    grid-auto-rows: 16px;
    gap: 4px 0;
    align-items: center;
}

.fields label {
    white-space: nowrap;
    overflow: hidden;
}

.fields select {
    height: 16px;
    padding-left: 2px;
    border: 1px solid #a5b5c8;
    background: #fff url("data:image/svg+xml,%3Csvg xmlns='http://www.w3.org/2000/svg' viewBox='0 0 12 14'%3E%3Crect width='12' height='14' rx='1' fill='%23c6d6f8'/%3E%3Cpath d='M3 5l3 3 3-3' fill='none' stroke='%23357' stroke-width='2'/%3E%3C/svg%3E") no-repeat right center / 12px 14px;
}

.widths {
    flex: 1;
    min-width: 0;
}

.width-row {
    display: flex;
    align-items: center;
    justify-content: space-between;
    height: 16px;
}

.width-row input {
    width: 29px;
    height: 14px;
    padding-left: 2px;
    border: 1px solid #a5b5c8;
    background: #fff;
}

.green {
    color: #3bc83b;
}

.pink {
    color: #d030d0;
}

.list {
    display: flex;
    align-items: flex-start;
    height: 44px;
    border: 1px solid #a5b5c8;
    background: #fff;
    overflow: hidden;
}

.list table {
    flex: 1;
    border-collapse: collapse;
    line-height: 9px;
}

.list td {
    width: 46%;
    padding: 0 1px;
}

.list td:first-child {
    width: 54%;
}

.list-scroll {
    display: flex;
    flex-direction: column;
    justify-content: space-between;
    width: 12px;
    height: 42px;
    background: #f4f4ee;
}

.list-scroll .thumb {
    height: 6px;
    margin-bottom: 12px;
}

.aligns {
    display: flex;
    gap: 4px;
    margin-top: 1px;
}

.aligns button {
    flex: 1;
    height: 14px;
    border: 1px solid #345;
    border-radius: 2px;
    background: #f7f6f0;
    line-height: 12px;
}

.aligns .swap {
    flex: none;
    width: 30px;
}

.dialog-tools {
    display: flex;
    align-items: center;
    gap: 1px;
    height: 20px;
    padding-left: 1px;
    border-top: 1px solid #c4c1b2;
    background: #ece9d8;
}

.dialog-tools .tool {
    width: 16px;
    height: 16px;
}

.dialog-tools .gap {
    margin-left: 6px;
}

.dialog-tools .on {
    border: 1px solid #aab8cc;
    background: #fff;
}

.dialog-tools .m {
    color: #c11;
    font-weight: bold;
    font-size: 10px;
}

/* floating widgets */
.speed {
    position: absolute;
    z-index: 6;
    top: 180px;
    right: 10px;
    display: flex;
    align-items: center;
    width: 92px;
    height: 35px;
}

.ball {
    z-index: 1;
    flex: none;
    width: 35px;
    height: 35px;
    border: 1px solid #e4f4e4;
    border-radius: 50%;
    background: linear-gradient(#1c7a4c 45%, #42c45c 50%);
    color: #fff;
    font-size: 11px;
    line-height: 33px;
    text-align: center;
}

.rates {
    display: flex;
    flex: 1;
    flex-direction: column;
    height: 28px;
    margin-left: -16px;
    padding: 3px 21px 0 20px;
    border-radius: 0 14px 14px 0;
    background: linear-gradient(#fafafa, #dcdcdc);
    font-size: 8px;
    line-height: 11px;
}

.rates span {
    display: flex;
    justify-content: space-between;
}

.up {
    color: #c33;
}

.down {
    color: #2a8a3c;
}

.boost {
    position: absolute;
    right: 6px;
    width: 13px;
    height: 13px;
    border-radius: 50%;
    background: #3c7ed8;
    color: #fff;
    font-size: 13px;
    line-height: 13px;
}

.boost::after {
    content: "";
    position: absolute;
    top: -1px;
    right: -1px;
    width: 5px;
    height: 5px;
    border-radius: 50%;
    background: #d83030;
}

.baidu {
    position: absolute;
    z-index: 6;
    right: 184px;
    bottom: 20px;
    display: flex;
    flex-direction: column;
    width: 50px;
    color: rgba(255, 255, 255, 0.8);
    text-shadow: 0 0 2px #aaa;
}

.baidu strong {
    font-size: 36px;
    line-height: 36px;
}

.baidu span {
    font-size: 20px;
    line-height: 24px;
}

.paw {
    position: absolute;
    right: 130px;
    bottom: 88px;
    display: flex;
    gap: 3px;
}

.paw i {
    width: 13px;
    height: 18px;
    border-radius: 50%;
    background: #c0c0c0;
}

.brand {
    position: absolute;
    z-index: 7;
    right: 0;
    bottom: 0;
    display: flex;
    align-items: center;
    gap: 6px;
    width: 200px;
    height: 95px;
    padding-left: 13px;
    background: #213056;
    color: #d4d6da;
}

.deer {
    flex: none;
    width: 43px;
    height: 59px;
}

.brand-text {
    padding-top: 8px;
    white-space: nowrap;
}

.brand-name {
    font-size: 28px;
    font-weight: 500;
    line-height: 28px;
}

.brand-name b {
    font-weight: normal;
    font-size: 36px;
}

.brand-url {
    font-size: 25px;
    line-height: 24px;
}
```
